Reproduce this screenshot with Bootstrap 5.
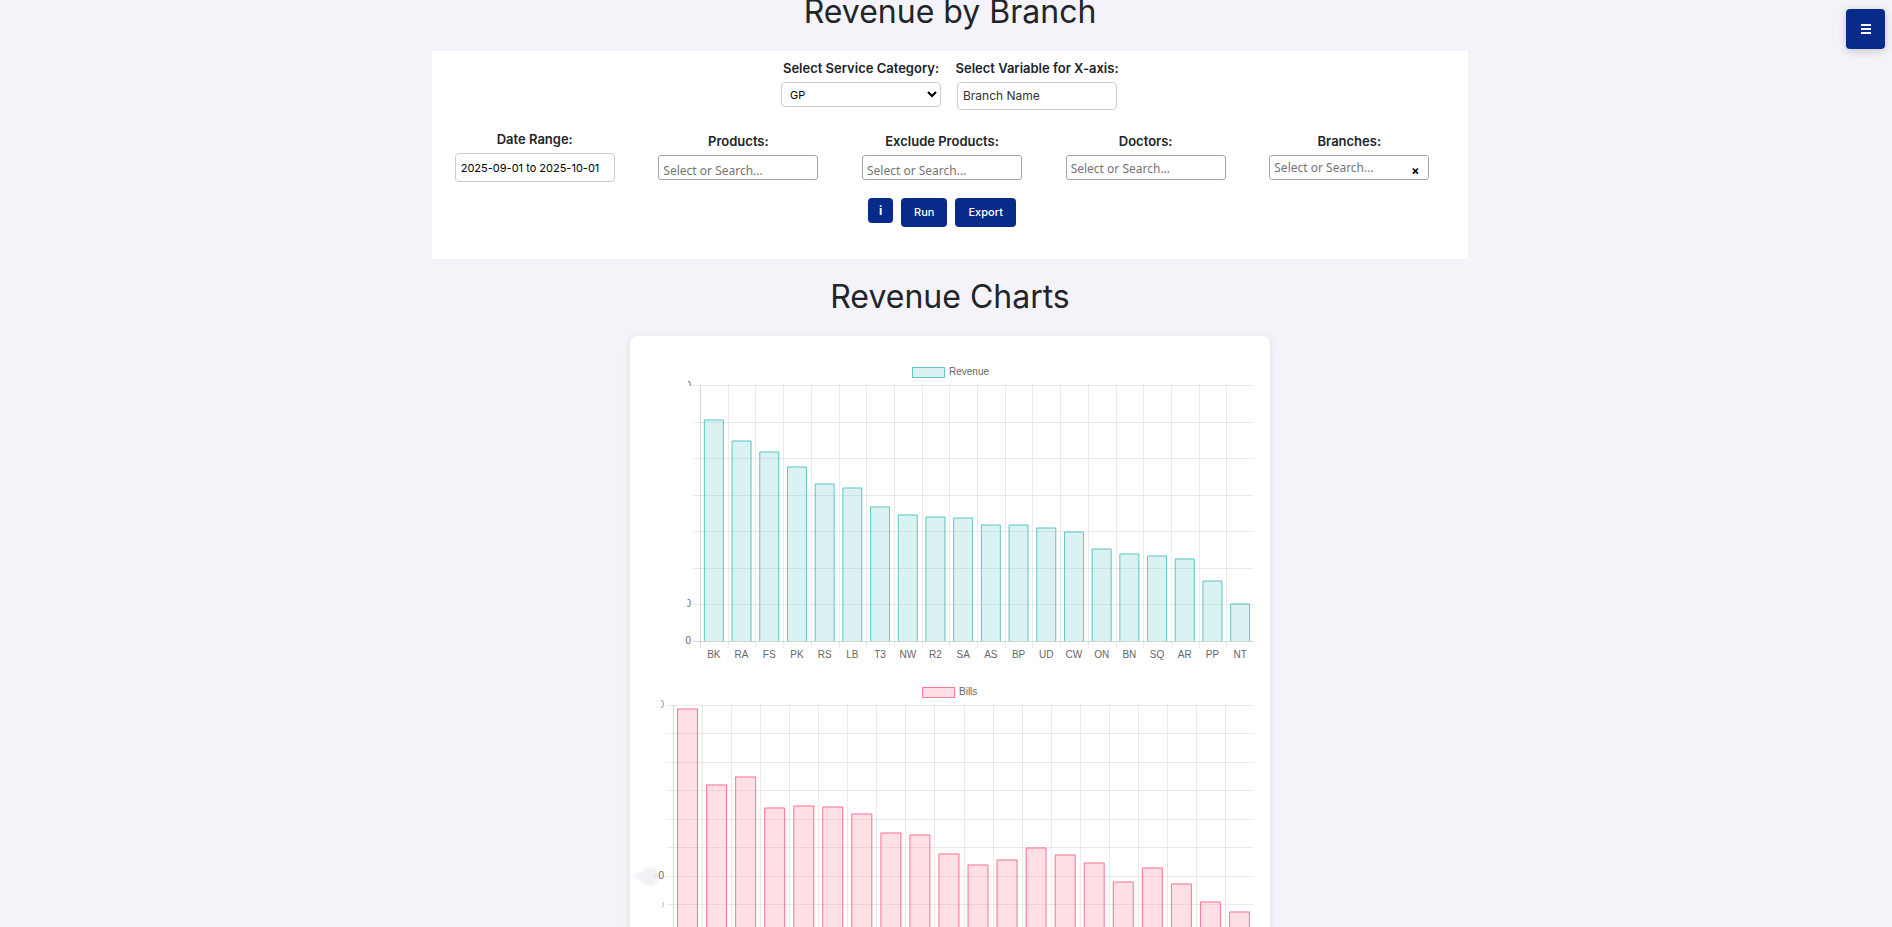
<!DOCTYPE html>
<html lang="en">
<head>
<meta charset="utf-8">
<meta name="viewport" content="width=device-width, initial-scale=1">
<title>Revenue by Branch</title>
<link href="https://cdn.jsdelivr.net/npm/bootstrap@5.3.0/dist/css/bootstrap.min.css" rel="stylesheet">
<style>
  html { scrollbar-width: none; }
  body { background: #f4f3f9; font-family: Inter, "Liberation Sans", sans-serif; }
  main { margin-top: -7px; padding-left: 8px; }
  .page-title { font-size: 32px; line-height: 38px; font-weight: 400; margin: 0 0 20px; }
  .charts-title { margin-top: 19px; }
  .filter-panel { width: 55%; min-width: 860px; padding: 7px 0 32px; }
  .filter-panel label { font-size: 13px; line-height: 20px; font-weight: 600; margin-bottom: 4px; white-space: nowrap; }
  .filter-row { padding: 0 17px 0 1px; }
  .top-row { padding-right: 2px; }
  .top-field { width: 160px; }
  .dates-row { margin-top: 19px; }
  .search-group { padding-top: 2px; }
  .field { width: 160px; height: 25px; border: 1px solid #ccc; border-radius: 4px; background: #fff; color: #000; font-size: 12px; padding: 0 5px; }
  select.field { font-size: 11px; padding: 0 4px; }
  .field-tall { height: 28px; color: #333; padding-bottom: 1px; }
  .field-date { height: 29px; font-size: 11px; }
  .search-field { border-color: #a6a6a6; border-radius: 3px; font-family: "Noto Sans", sans-serif; padding: 0 4px; }
  .search-field::placeholder { color: #757575; opacity: 1; }
  .search-low { padding-top: 6px; }
  .search-mid { padding-top: 2px; }
  .clear-btn { position: absolute; right: 9px; bottom: 0; height: 18px; width: 10px; line-height: 18px; font-size: 12px; font-weight: 700; border: 0; padding: 0; background: none; color: #000; }
  .btn-navy { --bs-btn-bg: #082a88; --bs-btn-color: #fff; --bs-btn-hover-bg: #061f66; --bs-btn-hover-color: #fff; --bs-btn-border-width: 0px; --bs-btn-border-radius: 4px; font-size: 11px; line-height: 17px; font-weight: 500; padding: 6px 13px; }
  .btn-info-sq { width: 25px; height: 25px; padding: 4px 0; font-size: 12px; font-weight: 700; }
  .menu-btn { position: fixed; top: 9px; right: 7px; width: 39px; height: 40px; padding: 0; line-height: 0; box-shadow: 0 2px 8px rgba(0,0,0,.2); }
  .chart-card { max-width: 640px; padding: 20px 0; border-radius: 8px; box-shadow: 0 2px 8px rgba(0,0,0,.1); }
  .chart-card svg { font-family: "Liberation Sans", Arial, sans-serif; font-size: 10px; fill: #666; }
</style>
</head>
<body>
<button class="btn btn-navy menu-btn" type="button" aria-label="Menu">
  <svg width="10" height="10" viewBox="0 0 10 10" fill="#fff"><path d="M0 0h10v2H0zM0 4h10v2H0zM0 8h10v2H0z"/></svg>
</button>

<main>
  <h1 class="page-title text-center">Revenue by Branch</h1>

  <form class="filter-panel bg-white mx-auto">
    <div class="top-row d-flex justify-content-center align-items-start gap-3">
      <div class="top-field d-flex flex-column align-items-center">
        <label for="category">Select Service Category:</label>
        <select class="field" id="category"><option>GP</option></select>
      </div>
      <div class="top-field d-flex flex-column align-items-center">
        <label for="xvar">Select Variable for X-axis:</label>
        <input class="field field-tall" id="xvar" type="text" value="Branch Name">
      </div>
    </div>

    <div class="filter-row dates-row d-flex align-items-start">
      <div class="d-flex flex-column align-items-center flex-fill">
        <label for="dates">Date Range:</label>
        <input class="field field-date" id="dates" type="text" value="2025-09-01 to 2025-10-01">
      </div>
      <div class="search-group d-flex flex-column align-items-center flex-fill">
        <label for="products">Products:</label>
        <input class="field search-field search-low" id="products" type="text" placeholder="Select or Search...">
      </div>
      <div class="search-group d-flex flex-column align-items-center flex-fill">
        <label for="exclude">Exclude Products:</label>
        <input class="field search-field search-low" id="exclude" type="text" placeholder="Select or Search...">
      </div>
      <div class="search-group d-flex flex-column align-items-center flex-fill">
        <label for="doctors">Doctors:</label>
        <input class="field search-field search-mid" id="doctors" type="text" placeholder="Select or Search...">
      </div>
      <div class="search-group d-flex flex-column align-items-center flex-fill">
        <label for="branches">Branches:</label>
        <div class="position-relative d-flex">
          <input class="field search-field" id="branches" type="text" placeholder="Select or Search...">
          <button class="clear-btn" type="button" aria-label="Clear branches">×</button>
        </div>
      </div>
    </div>

    <div class="filter-row d-flex justify-content-center align-items-start gap-2 mt-3">
      <button class="btn btn-navy btn-info-sq" type="button">i</button>
      <button class="btn btn-navy" type="button">Run</button>
      <button class="btn btn-navy" type="button">Export</button>
    </div>
  </form>

  <h2 class="page-title charts-title text-center">Revenue Charts</h2>

  <section class="chart-card bg-white mx-auto">
    <svg id="revenueChart" class="d-block w-100" viewBox="0 0 640 320" role="img" aria-label="Revenue"></svg>
    <svg id="billsChart" class="d-block w-100" viewBox="0 0 640 320" role="img" aria-label="Bills"></svg>
  </section>
</main>

<script src="https://cdn.jsdelivr.net/npm/bootstrap@5.3.0/dist/js/bootstrap.bundle.min.js"></script>
<script>
  const branches = ['BK','RA','FS','PK','RS','LB','T3','NW','R2','SA','AS','BP','UD','CW','ON','BN','SQ','AR','PP','NT'];
  const TOP = 29.5, BOTTOM = 285.5, RIGHT = 624;

  // Draws one bar chart; values are bar heights on a 256-unit axis.
  function drawChart(id, c) {
    const step = (RIGHT - c.left) / 20, bar = step * 0.72;
    let s = '';
    for (let i = 0; i <= c.rows; i++) {
      const y = Math.floor(TOP + i * 256 / c.rows) + 0.5;
      s += `<path d="M${c.left - 7} ${y}H${RIGHT}" stroke="#000" stroke-opacity="${i === c.rows ? .15 : .08}"/>`;
    }
    for (let i = 0; i < 20; i++) {
      const x = Math.round(c.left + i * step) + 0.5;
      s += `<path d="M${x} 29V292" stroke="#000" stroke-opacity="${i ? .08 : .15}"/>`;
    }
    c.values.forEach((v, i) => {
      const x = c.left + step * (i + .5) - bar / 2, y = BOTTOM - v;
      s += `<rect x="${x}" y="${y}" width="${bar}" height="${v}" fill="rgba(${c.rgb},.2)"/>`;
      s += `<path d="M${x + .5} ${BOTTOM - .5}V${y + .5}H${x + bar - .5}V${BOTTOM - .5}" fill="none" stroke="rgb(${c.rgb})" stroke-opacity=".85"/>`;
      if (c.labels) s += `<text x="${c.left + step * (i + .5)}" y="302" text-anchor="middle">${c.labels[i]}</text>`;
    });
    s += `<rect x="${c.legend + .5}" y="11.5" width="32" height="10" fill="rgba(${c.rgb},.2)" stroke="rgb(${c.rgb})" stroke-opacity=".85"/>`;
    s += `<text x="${c.legend + 37}" y="19">${c.name}</text>`;
    document.getElementById(id).innerHTML = s + c.axis;
  }

  // Axis values are masked: only the trailing edge of some digits shows.
  drawChart('revenueChart', {
    name: 'Revenue', rgb: '75,192,192', left: 70, rows: 7, legend: 282, labels: branches,
    values: [222,201,190,175,158,154,135,127,125,124,117,117,114,110,93,88,86,83,61,38],
    axis: `<text x="61" y="33" text-anchor="end">0</text><path d="M54 23h4v12h-4zM58 30h4v5h-4z" fill="#fff"/>
           <text x="61" y="251" text-anchor="end">0</text><path d="M54 242h3l1 3-1 7h-3z" fill="#fff"/>
           <text x="61" y="288" text-anchor="end">0</text>`
  });
  drawChart('billsChart', {
    name: 'Bills', rgb: '255,99,132', left: 43, rows: 9, legend: 292,
    values: [253,177,185,154,156,155,148,129,127,108,97,102,114,107,99,80,94,78,60,50],
    axis: `<defs><filter id="soft" filterUnits="userSpaceOnUse" x="-5" y="180" width="50" height="40"><feGaussianBlur stdDeviation="1.5"/></filter></defs>
           <g opacity=".7"><text x="34" y="32" text-anchor="end">0</text></g><path d="M26 22h5v12h-5z" fill="#fff"/>
           <path d="M3 200q7-2 11-7 10-5 13 1l2 6-3 8q-6 4-13-1-4-4-10-7z" fill="#f1f0f6" filter="url(#soft)"/>
           <path d="M24 200h6v1h-6z" fill="#eeb4c0" filter="url(#soft)"/>
           <text x="34" y="203" text-anchor="end">0</text>
           <g opacity=".5"><text x="34" y="232" text-anchor="end">0</text></g><path d="M26 222h6v12h-6zM32 222h3v4h-3z" fill="#fff"/>`
  });
</script>
</body>
</html>
